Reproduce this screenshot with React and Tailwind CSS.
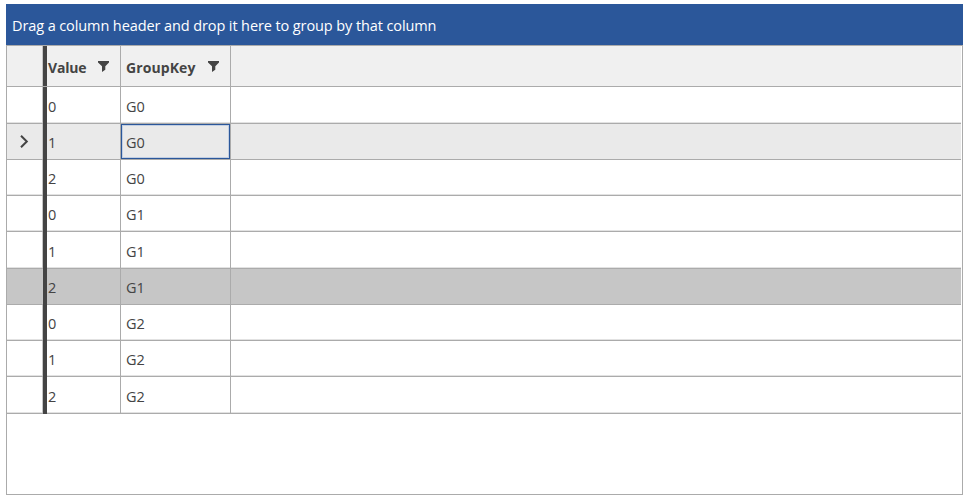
const rows = [
  { value: '0', group: 'G0', height: 'h-[37px]', leading: 'leading-[39px]', soft: true },
  { value: '1', group: 'G0', height: 'h-9', leading: 'leading-[38px]', current: true },
  { value: '2', group: 'G0', height: 'h-9', leading: 'leading-[38px]', soft: true },
  { value: '0', group: 'G1', height: 'h-9', leading: 'leading-[38px]', soft: true },
  { value: '1', group: 'G1', height: 'h-[37px]', leading: 'leading-[39px]', soft: true },
  { value: '2', group: 'G1', height: 'h-9', leading: 'leading-[38px]', selected: true },
  { value: '0', group: 'G2', height: 'h-9', leading: 'leading-[38px]', soft: true },
  { value: '1', group: 'G2', height: 'h-9', leading: 'leading-[38px]', soft: true },
  { value: '2', group: 'G2', height: 'h-[37px]', leading: 'leading-[39px]', soft: true },
];

function FilterIcon() {
  return (
    <svg width="11" height="11" viewBox="0 0 11 11" fill="#444444" className="shrink-0">
      <path d="M0 0H11V1.5L7.3 5.3V8.7L4 11V5.3L0 1.5Z" />
    </svg>
  );
}

function HeaderRow() {
  return (
    <div className="flex h-[41px] w-[954px] border-b border-[#ababab] bg-[#f0f0f0] text-[14px] font-bold leading-[40px] text-[#444444]">
      <div className="w-9 border-r border-[#c6c6c6]" />
      <div className="w-1 bg-[#444444]" />
      <div className="flex w-[74px] border-r border-[#ababab] pl-px">
        <span className="w-[50px] pt-[2px] tracking-[-0.2px] whitespace-nowrap">Value</span>
        <span className="pt-[15px]"><FilterIcon /></span>
      </div>
      <div className="flex w-[110px] border-r border-[#ababab] pl-[5px]">
        <span className="w-[82px] pt-[2px] tracking-[0.1px] whitespace-nowrap">GroupKey</span>
        <span className="pt-[15px]"><FilterIcon /></span>
      </div>
    </div>
  );
}

function Row({ row }) {
  const tone = row.selected ? 'bg-[#c6c6c6]' : row.current ? 'bg-[#eaeaea]' : 'bg-white';
  const edge = row.soft ? 'shadow-[inset_0_-1px_0_#e2e2e2]' : '';
  return (
    <div className={`flex w-[954px] border-b border-[#ababab] text-[14.5px] tracking-[-0.1px] text-[#444444] ${row.height} ${row.leading} ${tone} ${edge}`}>
      <div className="flex w-9 justify-center border-r border-[#c6c6c6] pt-[11px]">
        {row.current && (
          <svg width="9" height="13" viewBox="0 0 9 13" fill="none" stroke="#444444" strokeWidth="2">
            <path d="M1 0.8L6.8 6.5L1 12.2" />
          </svg>
        )}
      </div>
      <div className="-mb-px w-1 bg-[#444444]" />
      <div className="w-[74px] border-r border-[#ababab] pl-px">{row.value}</div>
      <div className="w-[110px] border-r border-[#ababab]">
        {row.current
          ? <div className="h-full border border-[#2b579a] pl-1 leading-[36px] shadow-[inset_0_0_0_1px_#c3cfe2]">{row.group}</div>
          : <div className="pl-[5px]">{row.group}</div>}
      </div>
    </div>
  );
}

export default function App() {
  return (
    <div className="h-[500px] w-[966px] overflow-hidden bg-white pl-1.5 pt-1 font-['Open_Sans','Noto_Sans',sans-serif]">
      <div className="h-[41px] w-[957px] bg-[#2b579a] pl-1.5 text-[14.5px] leading-[43px] tracking-[-0.1px] whitespace-nowrap text-white">
        Drag a column header and drop it here to group by that column
      </div>
      <div className="h-[450px] w-[957px] border border-[#ababab]">
        <HeaderRow />
        {rows.map((row, index) => <Row key={index} row={row} />)}
      </div>
    </div>
  );
}
